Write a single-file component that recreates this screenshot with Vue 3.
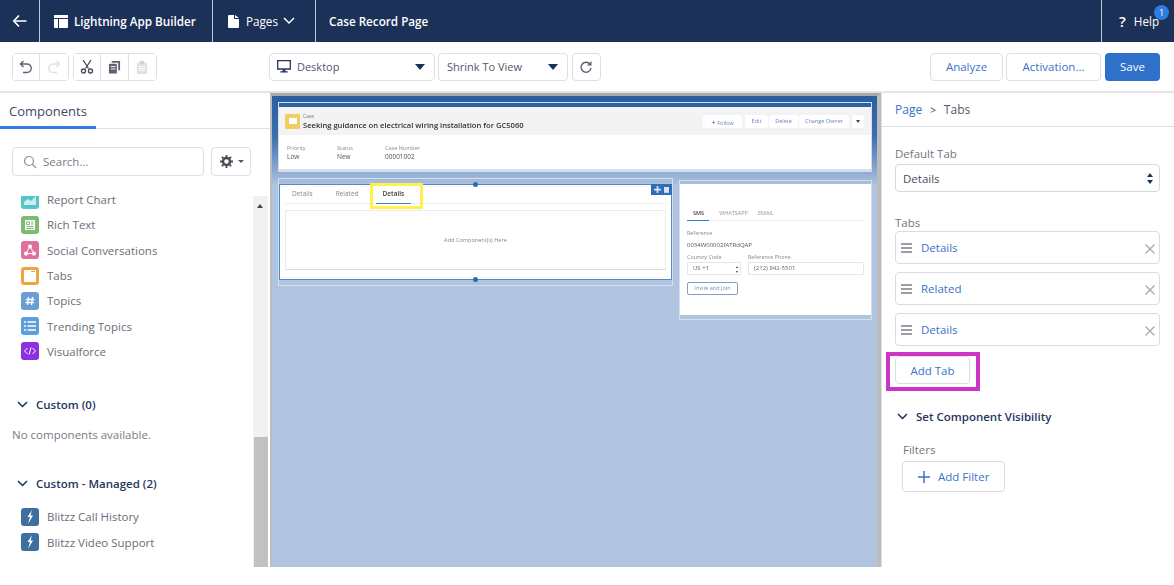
<script setup>
const standard = [
  { name: 'Report Chart', color: '#54c6c9', icon: 'chart' },
  { name: 'Rich Text', color: '#7dbb6f', icon: 'text' },
  { name: 'Social Conversations', color: '#e0709b', icon: 'social' },
  { name: 'Tabs', color: '#efa33c', icon: 'tabs' },
  { name: 'Topics', color: '#6a9fd6', icon: 'hash' },
  { name: 'Trending Topics', color: '#5c9fdc', icon: 'list' },
  { name: 'Visualforce', color: '#8f30e0', icon: 'code' }
]
const managed = ['Blitzz Call History', 'Blitzz Video Support']
const tabRows = ['Details', 'Related', 'Details']
const fields = [
  { label: 'Priority', value: 'Low' },
  { label: 'Status', value: 'New' },
  { label: 'Case Number', value: '00001002' }
]
</script>

<template>
  <div class="app">
    <header class="topbar">
      <div class="cell back">
        <svg width="16" height="14" viewBox="0 0 16 14"><path d="M7 1.500 1.800 7 7 12.500M2 7h12.500" fill="none" stroke="#fff" stroke-width="1.700"/></svg>
      </div>
      <div class="cell brand">
        <svg width="14" height="13" viewBox="0 0 14 13"><path d="M0 0h14v3H0zM0 4h4v9H1a1 1 0 0 1-1-1zM5 4h9v8a1 1 0 0 1-1 1H5z" fill="#fff"/></svg>
        <span>Lightning App Builder</span>
      </div>
      <div class="cell pages">
        <svg width="11" height="13" viewBox="0 0 11 13"><path d="M0 1a1 1 0 0 1 1-1h5v4h5v8a1 1 0 0 1-1 1H1a1 1 0 0 1-1-1zM7 0l4 3H7z" fill="#fff"/></svg>
        <span class="pages-label">Pages</span>
        <svg width="12" height="8" viewBox="0 0 12 8"><path d="M1 1l5 5 5-5" fill="none" stroke="#fff" stroke-width="1.500"/></svg>
      </div>
      <div class="page-name">Case Record Page</div>
      <div class="help">
        <span class="q">?</span>
        <span class="help-label">Help</span>
        <span class="badge">1</span>
      </div>
    </header>

    <div class="toolbar">
      <div class="btn-group undo">
        <button class="icon-btn"><svg width="14" height="14" viewBox="0 0 14 14"><path d="M4.500 1 1.500 4l3 3M2 4h6a4 4 0 0 1 0 8.500H4" fill="none" stroke="#5c6270" stroke-width="1.400"/></svg></button>
        <button class="icon-btn"><svg width="14" height="14" viewBox="0 0 14 14"><path d="M9.500 1l3 3-3 3M12 4H6a4 4 0 0 0 0 8.500h4" fill="none" stroke="#dfe1e6" stroke-width="1.400"/></svg></button>
      </div>
      <div class="btn-group edit">
        <button class="icon-btn"><svg width="14" height="14" viewBox="0 0 14 14"><path d="M3 0l5.500 8.500M11 0 5.500 8.500" fill="none" stroke="#474c58" stroke-width="1.300"/><circle cx="3.500" cy="11" r="2" fill="none" stroke="#474c58" stroke-width="1.400"/><circle cx="10.500" cy="11" r="2" fill="none" stroke="#474c58" stroke-width="1.400"/></svg></button>
        <button class="icon-btn"><svg width="13" height="13" viewBox="0 0 14 14"><path d="M4 0h9v10h-2V2H4z" fill="#5c6270"/><path d="M1 3h8.500v10.500H1z" fill="#5c6270"/><path d="M3 6h5M3 8.500h5" stroke="#fff" stroke-width="1"/></svg></button>
        <button class="icon-btn"><svg width="12" height="13" viewBox="0 0 13 14"><path d="M1 2h11v12H1z" fill="#dfe1e6"/><path d="M4 0h5v3H4z" fill="#cfd2d8"/><path d="M3 6h7M3 8h7M3 10h7" stroke="#fff"/></svg></button>
      </div>
      <div class="select desktop">
        <svg width="14" height="13" viewBox="0 0 15 14"><path d="M.7.7h13.600v9H.7z" fill="none" stroke="#24365c" stroke-width="1.400"/><path d="M6 10h3v2h2.500v1.500h-8V12H6z" fill="#24365c"/></svg>
        <span class="select-text">Desktop</span>
        <i class="caret"></i>
      </div>
      <div class="select shrink">
        <span class="select-text">Shrink To View</span>
        <i class="caret"></i>
      </div>
      <button class="refresh"><svg width="14" height="14" viewBox="0 0 14 14"><path d="M11 4.200A5 5 0 1 0 12 8" fill="none" stroke="#5c6270" stroke-width="1.400"/><path d="M12.500 1v4.500H8z" fill="#5c6270"/></svg></button>
      <div class="actions">
        <button class="text-btn analyze">Analyze</button>
        <button class="text-btn activation">Activation...</button>
        <button class="save">Save</button>
      </div>
    </div>

    <main class="main">
      <aside class="left">
        <div class="left-tabs"><span class="left-tab">Components</span></div>
        <div class="search-row">
          <div class="search">
            <svg width="14" height="14" viewBox="0 0 14 14"><circle cx="6" cy="6" r="4.500" fill="none" stroke="#8b8f99" stroke-width="1.200"/><path d="M9.200 9.200 13 13" stroke="#8b8f99" stroke-width="1.200"/></svg>
            <span>Search...</span>
          </div>
          <button class="gear">
            <svg width="13" height="13" viewBox="0 0 13 13"><circle cx="6.500" cy="6.500" r="3.500" fill="none" stroke="#474c58" stroke-width="2.400"/><path d="M6.500 0v2.500M6.500 10.500V13M0 6.500h2.500M10.500 6.500H13M1.900 1.900l1.800 1.800M9.300 9.300l1.800 1.800M11.100 1.900 9.300 3.700M3.700 9.300l-1.800 1.800" stroke="#474c58" stroke-width="1.800"/></svg>
            <i class="mini-caret"></i>
          </button>
        </div>
        <div class="scroll">
          <div class="list">
            <div class="list-inner">
              <div v-for="c in standard" :key="c.name" class="comp">
                <span class="comp-icon" :style="{ background: c.color }">
                  <svg width="14" height="14" viewBox="0 0 14 14">
                    <path v-if="c.icon === 'chart'" d="M1 12V9l4-3 3 2 5-5v9z" fill="#fff" opacity=".7"/>
                    <g v-else-if="c.icon === 'text'"><path d="M2 2h10v10H2z" fill="#fff"/><path d="M3.500 4h3v2.500h-3zM8 4h2.500M8 6h2.500M3.500 8.500h7M3.500 10.500h7" stroke="#7dbb6f" fill="none"/></g>
                    <g v-else-if="c.icon === 'social'"><circle cx="7" cy="3.500" r="2" fill="#fff"/><circle cx="3" cy="10.500" r="2" fill="#fff"/><circle cx="11" cy="10.500" r="2" fill="#fff"/><path d="M7 3.500 3 10.500h8z" fill="none" stroke="#fff"/></g>
                    <g v-else-if="c.icon === 'tabs'"><path d="M1 1h12v12H1z" fill="#fff"/><path d="M8 2.500h4" stroke="#efa33c"/></g>
                    <path v-else-if="c.icon === 'hash'" d="M5.500 3 4.500 11M9.500 3l-1 8M3 5.500h8.500M2.500 8.500H11" stroke="#fff" stroke-width="1.300"/>
                    <path v-else-if="c.icon === 'list'" d="M4.500 3H13M4.500 7H13M4.500 11H13M1 3h2M1 7h2M1 11h2" stroke="#fff" stroke-width="1.300"/>
                    <path v-else d="M4.500 4 1.500 7l3 3M9.500 4l3 3-3 3M8 3.500l-2 7" fill="none" stroke="#fff"/>
                  </svg>
                </span>
                <span>{{ c.name }}</span>
              </div>
              <div class="section custom">
                <svg width="11" height="7" viewBox="0 0 11 7"><path d="M1 1l4.500 4.500L10 1" fill="none" stroke="#16325c" stroke-width="1.500"/></svg>
                <span>Custom (0)</span>
              </div>
              <div class="none">No components available.</div>
              <div class="section managed">
                <svg width="11" height="7" viewBox="0 0 11 7"><path d="M1 1l4.500 4.500L10 1" fill="none" stroke="#16325c" stroke-width="1.500"/></svg>
                <span>Custom - Managed (2)</span>
              </div>
              <div v-for="m in managed" :key="m" class="comp">
                <span class="comp-icon bolt">
                  <svg width="10" height="14" viewBox="0 0 10 14"><path d="M7 0 2.500 7H5L3 14l5-8.500H5.500z" fill="#fff"/></svg>
                </span>
                <span>{{ m }}</span>
              </div>
            </div>
          </div>
          <div class="scrollbar">
            <i class="up"></i>
            <div class="thumb"></div>
          </div>
        </div>
      </aside>

      <section class="canvas">
        <div class="highlights">
          <div class="hl-head">
            <span class="hl-icon"><i></i></span>
            <div class="hl-title">
              <div class="hl-kicker">Case</div>
              <div class="hl-name">Seeking guidance on electrical wiring installation for GC5060</div>
            </div>
            <div class="hl-btns">
              <span class="hl-btn follow"><b>+</b> Follow</span>
              <span class="hl-group">
                <span class="hl-btn edit-b">Edit</span>
                <span class="hl-btn del-b">Delete</span>
                <span class="hl-btn owner-b">Change Owner</span>
              </span>
              <span class="hl-btn more"><i></i></span>
            </div>
          </div>
          <div class="hl-fields">
            <div v-for="f in fields" :key="f.label" class="hl-field">
              <div class="hl-label">{{ f.label }}</div>
              <div class="hl-value">{{ f.value }}</div>
            </div>
          </div>
        </div>

        <div class="regions">
          <div class="region main-region">
            <div class="selected">
              <i class="handle top"></i>
              <i class="handle bottom"></i>
              <div class="sel-actions">
                <svg width="7" height="7" viewBox="0 0 8 8"><path d="M3 0h2v3h3v2H5v3H3V5H0V3h3z" fill="#d5e3f3"/></svg>
                <svg width="5" height="7" viewBox="0 0 6 8"><path d="M0 1h6v7H0z" fill="#d5e3f3"/></svg>
              </div>
              <div class="p-tabs">
                <span class="p-tab t1">Details</span>
                <span class="p-tab t2">Related</span>
                <span class="p-tab t3 active">Details<i class="yellow"></i></span>
              </div>
              <div class="dropzone">Add Component(s) Here</div>
            </div>
          </div>
          <div class="region side-region">
            <div class="side-card">
              <div class="s-tabs">
                <span class="s-tab active">SMS</span>
                <span class="s-tab">WHATSAPP</span>
                <span class="s-tab">EMAIL</span>
              </div>
              <div class="s-label ref">Reference</div>
              <div class="s-value">0034W00002fATRdQAP</div>
              <div class="s-grid">
                <div>
                  <div class="s-label">Country Code</div>
                  <div class="s-input code"><span>US +1</span><em>▴<br>▾</em></div>
                </div>
                <div class="phone">
                  <div class="s-label">Reference Phone</div>
                  <div class="s-input">(212) 842-5501</div>
                </div>
              </div>
              <div class="invite">Invite and Join</div>
            </div>
          </div>
        </div>
      </section>

      <aside class="right">
        <div class="crumbs">
          <span class="crumb-link">Page</span>
          <span class="crumb-sep">&gt;</span>
          <span>Tabs</span>
        </div>
        <div class="props">
          <div class="prop-label">Default Tab</div>
          <div class="prop-select">
            <span>Details</span>
            <span class="updown"><i class="u"></i><i class="d"></i></span>
          </div>
          <div class="prop-label tabs-label">Tabs</div>
          <div class="tab-rows">
            <div v-for="(t, i) in tabRows" :key="i" class="tab-row">
              <svg width="12" height="10" viewBox="0 0 12 10"><path d="M0 1h11M0 5h11M0 9h11" stroke="#7b7e86" stroke-width="1.500"/></svg>
              <span class="tab-link">{{ t }}</span>
              <svg class="close" width="10" height="10" viewBox="0 0 10 10"><path d="M.5.5l9 9M9.500.5l-9 9" stroke="#a9abb1" stroke-width="1.400"/></svg>
            </div>
          </div>
          <button class="add-tab">Add Tab<i class="magenta"></i></button>
          <div class="section visibility">
            <svg width="11" height="7" viewBox="0 0 11 7"><path d="M1 1l4.500 4.500L10 1" fill="none" stroke="#16325c" stroke-width="1.500"/></svg>
            <span>Set Component Visibility</span>
          </div>
          <div class="filters">Filters</div>
          <button class="add-filter">
            <svg width="12" height="12" viewBox="0 0 12 12"><path d="M6 0v12M0 6h12" stroke="#3b72c9" stroke-width="1.500"/></svg>
            <span>Add Filter</span>
          </button>
        </div>
      </aside>
    </main>
  </div>
</template>

<style scoped>
* { box-sizing: border-box; }
.app { width: 1174px; height: 585px; display: flex; flex-direction: column; font-family: "Open Sans", "Noto Sans", sans-serif; background: #fff; overflow: hidden; color: #54586a; }
button { font-family: inherit; background: #fff; padding: 0; cursor: default; }

.topbar { height: 42px; flex: none; background: #1c3158; color: #fff; display: flex; align-items: center; font-size: 11.700px; font-weight: 600; }
.cell { height: 100%; display: flex; align-items: center; border-right: 1px solid #c3cad6; }
.back { width: 40px; padding-left: 12px; }
.brand { width: 173px; padding-left: 14px; gap: 6px; }
.pages { width: 103px; padding-left: 15px; }
.pages-label { margin: 0 5px 0 7px; font-weight: 400; }
.page-name { margin-left: 13px; }
.help { margin-left: auto; width: 73px; height: 100%; border-left: 1px solid #c3cad6; position: relative; display: flex; align-items: center; padding-left: 17px; font-weight: 400; }
.q { font-size: 15px; font-weight: 600; margin-right: 8px; }
.badge { position: absolute; left: 52px; top: 5px; width: 15px; height: 15px; border-radius: 50%; background: #2f7be0; font-size: 9px; line-height: 15px; text-align: center; }

.toolbar { height: 51px; flex: none; border-bottom: 2px solid #e4e4e6; display: flex; align-items: flex-start; padding: 11px 14px 0 12px; }
.btn-group { height: 28px; display: flex; border: 1px solid #dcdfe6; border-radius: 4px; background: #fff; }
.icon-btn { width: 27.400px; height: 100%; border: 0; border-right: 1px solid #dcdfe6; display: flex; align-items: center; justify-content: center; }
.icon-btn:last-child { border-right: 0; }
.edit { margin-left: 4px; }
.select { height: 28px; border: 1px solid #dcdfe6; border-radius: 4px; display: flex; align-items: center; font-size: 11px; color: #54586a; padding-bottom: 1px; }
.desktop { width: 166px; margin-left: 112px; padding-left: 7px; padding-right: 9px; }
.desktop .select-text { margin-left: 6px; }
.shrink { width: 130px; margin-left: 3px; padding-left: 8px; padding-right: 9px; }
.caret { margin-left: auto; border-left: 5px solid transparent; border-right: 5px solid transparent; border-top: 6px solid #16325c; }
.refresh { width: 29px; height: 28px; margin-left: 4px; border: 1px solid #dcdfe6; border-radius: 4px; display: flex; align-items: center; justify-content: center; }
.actions { margin-left: auto; display: flex; gap: 3px; }
.text-btn { height: 28px; border: 1px solid #dcdfe6; border-radius: 4px; color: #3b72c9; font-size: 11.500px; padding-bottom: 1px; }
.analyze { width: 73px; }
.activation { width: 95px; }
.save { width: 55px; height: 28px; margin-left: 1px; border: 0; border-radius: 4px; background: #2f70c9; color: #fff; font-size: 11.500px; padding-bottom: 1px; }

.main { height: 474px; flex: none; display: flex; }
.left { width: 270px; flex: none; display: flex; flex-direction: column; }
.left-tabs { height: 36px; border-bottom: 1px solid #dcdfe6; flex: none; }
.left-tab { display: block; width: 96px; height: 36px; padding: 9px 0 0 9px; font-size: 13px; color: #3e4a66; border-bottom: 3px solid #2f7be0; }
.search-row { display: flex; flex: none; padding: 18px 0 20px 12px; gap: 7px; }
.search { width: 192px; height: 29px; border: 1px solid #dcdfe6; border-radius: 4px; display: flex; align-items: center; padding-left: 10px; gap: 6px; font-size: 11.500px; color: #777b86; }
.gear { width: 40px; height: 29px; border: 1px solid #dcdfe6; border-radius: 4px; display: flex; align-items: center; padding-left: 8px; gap: 5px; }
.mini-caret { border-left: 3px solid transparent; border-right: 3px solid transparent; border-top: 3px solid #54586a; }
.scroll { flex: 1; min-height: 0; display: flex; }
.list { width: 253px; overflow: hidden; }
.list-inner { margin-top: -9px; }
.comp { height: 25.300px; display: flex; align-items: center; padding-left: 21px; gap: 8px; font-size: 11.500px; color: #6a6d78; }
.comp-icon { width: 18px; height: 18px; border-radius: 3px; display: flex; align-items: center; justify-content: center; flex: none; }
.bolt { background: #3e6f9e; }
.section { display: flex; align-items: center; gap: 8px; font-size: 11.500px; font-weight: 600; color: #24365c; }
.custom { margin: 31px 0 0 17px; height: 18px; }
.none { font-size: 11.500px; color: #777b86; padding-left: 12px; margin-top: 14px; height: 18px; }
.managed { margin: 29px 0 12px 17px; height: 18px; }
.scrollbar { width: 15px; background: #f1f1f1; position: relative; display: flex; flex-direction: column; }
.up { position: absolute; left: 4px; top: 8px; border-left: 3px solid transparent; border-right: 3px solid transparent; border-bottom: 4px solid #444; }
.thumb { margin-top: auto; height: 130px; background: #c1c1c1; margin-left: 1px; }

.canvas { width: 611px; flex: none; border-top: 3px solid #a8a8a8; border-left: 2px solid #bdbdbd; border-right: 4px solid #bcbcbc; background: linear-gradient(#2a5e9f 0, #3a6fae 40px, #b0c4df 90px); padding: 6px 5px 0 6px; filter: blur(.25px); }
.highlights { border: 1px solid #d3dff0; border-bottom-width: 3px; padding-top: 4px; height: 70px; display: flex; flex-direction: column; }
.hl-head { height: 28px; background: #f3f3f3; display: flex; align-items: center; padding: 0 7px 0 6px; flex: none; }
.hl-icon { width: 15px; height: 15px; background: #f0ce62; border-radius: 1px; display: flex; align-items: center; justify-content: center; }
.hl-icon i { width: 8px; height: 6px; background: #fff; }
.hl-title { margin-left: 3px; }
.hl-kicker { font-size: 5px; line-height: 7px; color: #777; }
.hl-name { font-size: 7.600px; line-height: 10px; font-weight: 600; color: #333; }
.hl-btns { margin-left: auto; display: flex; gap: 3px; }
.hl-btn { height: 13px; background: #fff; border-radius: 2px; font-size: 5.500px; line-height: 13px; text-align: center; color: #6a86b8; display: block; }
.follow { width: 39px; }
.follow b { color: #2d5ea6; font-size: 8px; font-weight: 400; }
.hl-group { display: flex; gap: 1px; }
.edit-b { width: 23px; }
.del-b { width: 29px; }
.owner-b { width: 50px; }
.more { width: 12px; display: flex; align-items: center; justify-content: center; }
.more i { border-left: 2.500px solid transparent; border-right: 2.500px solid transparent; border-top: 3px solid #444; }
.hl-fields { flex: 1; background: #fff; display: flex; padding: 9px 0 0 8px; }
.hl-field { width: 50px; }
.hl-field:nth-child(3) { margin-left: -2px; }
.hl-label { font-size: 5.500px; line-height: 8px; color: #8a8d96; }
.hl-value { font-size: 6.500px; line-height: 9px; color: #555; }

.regions { display: flex; gap: 6px; margin-top: 6px; align-items: flex-start; }
.region { border: 1px solid #d3dff0; }
.main-region { width: 395px; height: 108px; padding: 5px 0 0 0; position: relative; }
.selected { height: 96px; background: #fff; border: 1px solid #4f8bc8; position: relative; padding: 0 5px; }
.handle { position: absolute; left: 193px; width: 5px; height: 5px; border-radius: 50%; background: #2a6ab0; }
.handle.top { top: -3px; }
.handle.bottom { bottom: -3px; }
.sel-actions { position: absolute; right: -1px; top: -1px; width: 21px; height: 11px; background: #2f6db5; display: flex; align-items: center; justify-content: center; gap: 3px; }
.p-tabs { height: 19px; border-bottom: 1px solid #eee; display: flex; font-size: 6.500px; color: #888; }
.p-tab { position: relative; height: 19px; line-height: 17px; display: block; }
.t1 { margin-left: 7px; }
.t2 { margin-left: 23px; }
.t3 { margin-left: 17px; padding: 0 7px; color: #444; font-weight: 600; border-bottom: 1px solid #4a7fc0; }
.yellow { position: absolute; left: -6px; top: -2px; width: 53px; height: 26px; border: 3px solid #fff04a; }
.dropzone { margin-top: 6px; height: 60px; border: 1px solid #eceaf1; border-bottom-color: #dcd9e4; display: flex; align-items: center; justify-content: center; font-size: 5.600px; color: #80859a; }

.side-region { width: 193px; height: 140px; padding: 3px 0 4px; margin-top: 2px; }
.side-card { height: 131px; background: #fff; padding: 25px 7px 0; }
.s-tabs { display: flex; gap: 10px; height: 12px; border-bottom: 1px solid #f0f0f0; font-size: 5.500px; color: #999; }
.s-tab.active { color: #444; padding: 0 5px 0 6px; margin-left: 0; border-bottom: 1px solid #2f7be0; height: 12px; font-weight: 600; }
.s-label { font-size: 5.400px; line-height: 8px; color: #888; }
.s-label.ref { margin-top: 8px; }
.s-value { font-size: 6px; line-height: 9px; color: #555; margin-top: 4px; }
.s-grid { display: flex; margin-top: 3px; gap: 7px; }
.phone { flex: 1; }
.s-input { height: 13px; margin-top: 1px; border: 1px solid #e6e6e6; border-radius: 1px; font-size: 6px; line-height: 11px; padding-left: 5px; color: #666; display: flex; justify-content: space-between; }
.code { width: 54px; }
.code em { font-style: normal; font-size: 4px; line-height: 5px; color: #345; padding: 1px 2px; }
.invite { width: 51px; height: 13px; margin-top: 7px; border: 1px solid #7f9fcb; border-radius: 2px; font-size: 5.500px; line-height: 11px; text-align: center; color: #7f8fae; }

.right { flex: 1; min-width: 0; border-left: 1px solid #dcdfe6; }
.crumbs { height: 34px; border-bottom: 1px solid #dcdfe6; display: flex; align-items: center; padding: 0 0 0 13px; gap: 8px; font-size: 12px; color: #54586a; }
.crumb-link { color: #3b72c9; }
.crumb-sep { font-size: 10px; color: #444; }
.props { padding: 19px 14px 0 13px; position: relative; }
.prop-label { font-size: 11.500px; line-height: 16px; color: #72757f; }
.prop-select { margin-top: 2px; width: 265px; height: 28px; border: 1px solid #d8d8da; border-radius: 4px; display: flex; align-items: center; justify-content: space-between; padding: 0 6px 0 7px; font-size: 11.500px; color: #4b4f5e; }
.updown { display: flex; flex-direction: column; gap: 3px; }
.u { border-left: 3px solid transparent; border-right: 3px solid transparent; border-bottom: 4px solid #16325c; }
.d { border-left: 3px solid transparent; border-right: 3px solid transparent; border-top: 4px solid #16325c; }
.tabs-label { margin-top: 23px; }
.tab-rows { margin-top: 0; display: flex; flex-direction: column; gap: 8px; width: 265px; }
.tab-row { height: 33px; border: 1px solid #dcdcde; border-radius: 4px; display: flex; align-items: center; padding: 0 4px 0 5px; gap: 8px; font-size: 11.500px; color: #3b72c9; }
.close { margin-left: auto; margin-top: 2px; }
.add-tab { position: relative; display: block; width: 75px; height: 28px; margin-top: 10px; border: 1px solid #dcdcde; border-radius: 4px; color: #3b72c9; font-size: 11.500px; }
.magenta { position: absolute; left: -10px; top: -5px; width: 94px; height: 39px; border: 4px solid #cc36c4; }
.visibility { margin: 23px 0 0 2px; height: 18px; }
.filters { margin: 17px 0 0 8px; font-size: 11.500px; color: #72757f; line-height: 16px; }
.add-filter { margin: 3px 0 0 7px; width: 103px; height: 31px; border: 1px solid #dcdcde; border-radius: 4px; display: flex; align-items: center; padding-left: 15px; gap: 8px; color: #3b72c9; font-size: 11.500px; }
</style>

<style>
html, body { margin: 0; background: #fff; }
</style>
